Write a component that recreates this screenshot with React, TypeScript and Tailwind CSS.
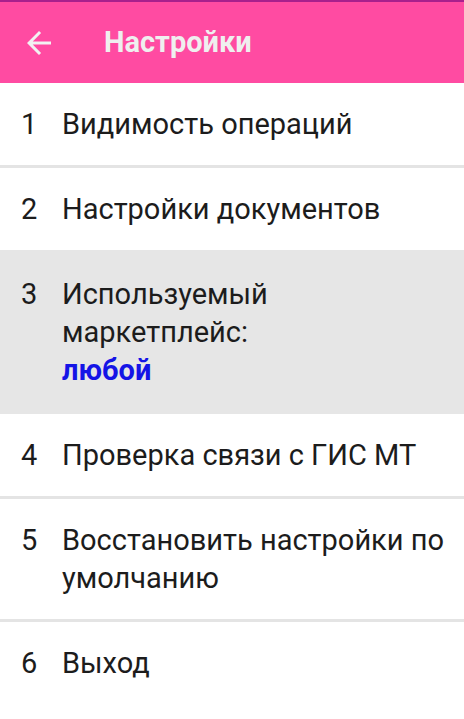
const items = [
  { n: "1", lines: ["Видимость операций"] },
  { n: "2", lines: ["Настройки документов"] },
  { n: "3", lines: ["Используемый", "маркетплейс:"], value: "любой", active: true },
  { n: "4", lines: ["Проверка связи с ГИС МТ"] },
  { n: "5", lines: ["Восстановить настройки по", "умолчанию"] },
  { n: "6", lines: ["Выход"] },
];

export default function App() {
  return (
    <div className="min-h-screen w-[464px] bg-white font-['Roboto',sans-serif] text-[#1c1c1c]">
      {/* Status strip */}
      <div className="h-[2px] bg-[#a9208d]" />

      {/* Toolbar */}
      <header className="h-[81px] bg-[#ff4ba2] flex items-center">
        <button className="ml-[21px] w-[36px] h-[36px] flex items-center justify-center text-[#f2f2f2]">
          <svg width="36" height="36" viewBox="0 0 24 24" fill="currentColor">
            <path d="M20 11H7.83l5.59-5.59L12 4l-8 8 8 8 1.41-1.41L7.83 13H20v-2z" />
          </svg>
        </button>
        <h1 className="ml-[47px] text-[29px] font-bold text-[#efefef]">Настройки</h1>
      </header>

      {/* Menu */}
      <ul>
        {items.map((item, i) => {
          const nextActive = items[i + 1]?.active;
          return (
            <li key={item.n}>
              <div
                className={`flex pl-[21px] pr-[10px] py-[22px] text-[29px] leading-[38px] ${
                  item.active ? "bg-[#e6e6e6]" : ""
                }`}
              >
                <span className="w-[41px] shrink-0">{item.n}</span>
                <div>
                  {item.lines.map((l) => (
                    <div key={l} className="whitespace-nowrap">{l}</div>
                  ))}
                  {item.value && <div className="font-bold text-[#1414e6]">{item.value}</div>}
                </div>
              </div>
              {i < items.length - 1 && (
                <div className={`h-[3px] ${item.active || nextActive ? "bg-[#e6e6e6]" : "bg-[#e4e4e4]"}`} />
              )}
            </li>
          );
        })}
      </ul>
    </div>
  );
}
